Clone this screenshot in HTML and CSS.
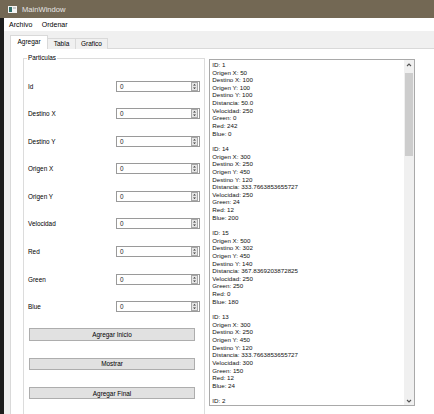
FILE: index.html
```html
<!DOCTYPE html>
<html>
<head>
<meta charset="utf-8">
<link rel="stylesheet" href="styles.css">
</head>
<body>
<div class="titlebar">
  <svg class="appicon" viewBox="0 0 9 7"><rect x="0" y="0" width="9" height="7" fill="#f4f4f4"/><rect x="1" y="1" width="3" height="5" fill="#2f6f6a"/><rect x="5" y="1" width="3" height="2" fill="#c9c9c9"/></svg>
  <span>MainWindow</span>
</div>
<div class="main">
  <div class="desk"></div>
  <div class="win">
    <div class="menubar"><span class="menu">Archivo</span><span class="menu">Ordenar</span></div>
    <div class="client">
      <div class="tabbar">
        <div class="tab active t1">Agregar</div>
        <div class="tab t2">Tabla</div>
        <div class="tab t3">Grafico</div>
      </div>
      <div class="pane">
        <div class="group">
          <span class="legend">Particulas</span>
          <div class="fields">
            <div class="field"><span class="lbl">Id</span><div class="spin"><span>0</span><svg class="spinbtn" viewBox="0 0 7 9"><rect x="0.5" y="0.5" width="6" height="8" fill="#e6e6e6" stroke="#a8a8a8"/><path d="M2 3.6 L3.5 2 L5 3.6Z M2 5.4 L3.5 7 L5 5.4Z" fill="#333"/></svg></div></div>
            <div class="field"><span class="lbl">Destino X</span><div class="spin"><span>0</span><svg class="spinbtn" viewBox="0 0 7 9"><rect x="0.5" y="0.5" width="6" height="8" fill="#e6e6e6" stroke="#a8a8a8"/><path d="M2 3.6 L3.5 2 L5 3.6Z M2 5.4 L3.5 7 L5 5.4Z" fill="#333"/></svg></div></div>
            <div class="field"><span class="lbl">Destino Y</span><div class="spin"><span>0</span><svg class="spinbtn" viewBox="0 0 7 9"><rect x="0.5" y="0.5" width="6" height="8" fill="#e6e6e6" stroke="#a8a8a8"/><path d="M2 3.6 L3.5 2 L5 3.6Z M2 5.4 L3.5 7 L5 5.4Z" fill="#333"/></svg></div></div>
            <div class="field"><span class="lbl">Origen X</span><div class="spin"><span>0</span><svg class="spinbtn" viewBox="0 0 7 9"><rect x="0.5" y="0.5" width="6" height="8" fill="#e6e6e6" stroke="#a8a8a8"/><path d="M2 3.6 L3.5 2 L5 3.6Z M2 5.4 L3.5 7 L5 5.4Z" fill="#333"/></svg></div></div>
            <div class="field"><span class="lbl">Origen Y</span><div class="spin"><span>0</span><svg class="spinbtn" viewBox="0 0 7 9"><rect x="0.5" y="0.5" width="6" height="8" fill="#e6e6e6" stroke="#a8a8a8"/><path d="M2 3.6 L3.5 2 L5 3.6Z M2 5.4 L3.5 7 L5 5.4Z" fill="#333"/></svg></div></div>
            <div class="field"><span class="lbl">Velocidad</span><div class="spin"><span>0</span><svg class="spinbtn" viewBox="0 0 7 9"><rect x="0.5" y="0.5" width="6" height="8" fill="#e6e6e6" stroke="#a8a8a8"/><path d="M2 3.6 L3.5 2 L5 3.6Z M2 5.4 L3.5 7 L5 5.4Z" fill="#333"/></svg></div></div>
            <div class="field"><span class="lbl">Red</span><div class="spin"><span>0</span><svg class="spinbtn" viewBox="0 0 7 9"><rect x="0.5" y="0.5" width="6" height="8" fill="#e6e6e6" stroke="#a8a8a8"/><path d="M2 3.6 L3.5 2 L5 3.6Z M2 5.4 L3.5 7 L5 5.4Z" fill="#333"/></svg></div></div>
            <div class="field"><span class="lbl">Green</span><div class="spin"><span>0</span><svg class="spinbtn" viewBox="0 0 7 9"><rect x="0.5" y="0.5" width="6" height="8" fill="#e6e6e6" stroke="#a8a8a8"/><path d="M2 3.6 L3.5 2 L5 3.6Z M2 5.4 L3.5 7 L5 5.4Z" fill="#333"/></svg></div></div>
            <div class="field"><span class="lbl">Blue</span><div class="spin"><span>0</span><svg class="spinbtn" viewBox="0 0 7 9"><rect x="0.5" y="0.5" width="6" height="8" fill="#e6e6e6" stroke="#a8a8a8"/><path d="M2 3.6 L3.5 2 L5 3.6Z M2 5.4 L3.5 7 L5 5.4Z" fill="#333"/></svg></div></div>
          </div>
          <div class="buttons">
            <div class="btn">Agregar Inicio</div>
            <div class="btn">Mostrar</div>
            <div class="btn">Agregar Final</div>
          </div>
        </div>
        <div class="output">
          <pre class="text">ID: 1
Origen X: 50
Destino X: 100
Origen Y: 100
Destino Y: 100
Distancia: 50.0
Velocidad: 250
Green: 0
Red: 242
Blue: 0

ID: 14
Origen X: 300
Destino X: 250
Origen Y: 450
Destino Y: 120
Distancia: 333.7663853655727
Velocidad: 250
Green: 24
Red: 12
Blue: 200

ID: 15
Origen X: 500
Destino X: 302
Origen Y: 450
Destino Y: 140
Distancia: 367.8369203872825
Velocidad: 250
Green: 250
Red: 0
Blue: 180

ID: 13
Origen X: 300
Destino X: 250
Origen Y: 450
Destino Y: 120
Distancia: 333.7663853655727
Velocidad: 300
Green: 150
Red: 12
Blue: 24

ID: 2</pre>
          <div class="vscroll">
            <svg class="arrow" viewBox="0 0 6 4"><path d="M1 3 L3 1 L5 3" fill="none" stroke="#555" stroke-width="1.1"/></svg>
            <div class="track"><div class="thumb"></div></div>
            <svg class="arrow" viewBox="0 0 6 4"><path d="M1 1 L3 3 L5 1" fill="none" stroke="#555" stroke-width="1.1"/></svg>
          </div>
        </div>
      </div>
    </div>
  </div>
</div>
</body>
</html>
```

FILE: styles.css
```css
* { box-sizing: border-box; }
body {
  margin: 0;
  width: 434px;
  height: 414px;
  overflow: hidden;
  background: #f0f0f0;
  font-family: "Liberation Sans", Arial, sans-serif;
  color: #000;
}
.titlebar {
  height: 18px;
  background: #736854;
  display: flex;
  align-items: center;
  padding-left: 8px;
  color: #e6e6e6;
  font-size: 7.6px;
}
.appicon { width: 9px; height: 7px; margin-right: 5px; }
.main { display: flex; height: 396px; overflow: hidden; }
.desk { width: 4px; background: #1d1d1d; flex: none; }
.win { flex: 1; display: flex; flex-direction: column; background: #f0f0f0; min-width: 0; }
.menubar {
  height: 13px;
  background: #fff;
  display: flex;
  align-items: center;
  font-size: 7px;
  padding-left: 5px;
}
.menu { margin-right: 9.5px; }
.client { flex: 1; display: flex; flex-direction: column; padding: 4px 0 0 6px; min-height: 0; }
.tabbar { display: flex; align-items: flex-end; height: 14px; margin-bottom: -1px; position: relative; z-index: 1; }
.tab {
  height: 11px;
  border: 1px solid #d9d9d9;
  border-bottom: none;
  background: #f0f0f0;
  font-size: 6.5px;
  display: flex;
  align-items: center;
  justify-content: center;
  margin-left: -1px;
  padding-bottom: 1px;
}
.tab.active { height: 14px; background: #fff; margin-left: 0; padding-bottom: 2px; }
.t1 { width: 38px; }
.t2 { width: 29px; }
.t3 { width: 33px; }
.pane {
  flex: 1;
  border: 1px solid #d9d9d9;
  border-bottom: none;
  background: #fff;
  display: flex;
  align-items: stretch;
  padding: 9px 0 0 12px;
  margin-right: -20px;
  min-height: 0;
  overflow: hidden;
}
.group {
  position: relative;
  width: 182px;
  border: 1px solid #dcdcdc;
  border-bottom: none;
  padding: 21.7px 4px 0 4px;
  flex: none;
}
.legend {
  position: absolute;
  left: 3px;
  top: -5px;
  background: #fff;
  padding: 0 1px;
  font-size: 6.4px;
  line-height: 8px;
}
.fields { display: flex; flex-direction: column; gap: 16.55px; }
.field { display: flex; align-items: center; height: 11px; }
.lbl { font-size: 6.4px; }
.spin {
  margin-left: auto;
  width: 84px;
  height: 11px;
  border: 1px solid #9a9a9a;
  background: #fff;
  display: flex;
  align-items: center;
  padding: 0 1px 0 3px;
  font-size: 6.4px;
  color: #222;
}
.spin span { flex: 1; }
.spinbtn { width: 7px; height: 9px; }
.buttons { display: flex; flex-direction: column; gap: 16.9px; margin-top: 16.3px; padding: 0 5px 0 1px; }
.btn {
  height: 12.4px;
  background: #e1e1e1;
  border: 1px solid #adadad;
  font-size: 6.4px;
  display: flex;
  align-items: center;
  justify-content: center;
}
.output {
  margin: 1.3px 0 0 4.3px;
  width: 206px;
  height: 346.4px;
  border: 1px solid #a9a9a9;
  background: #fff;
  display: flex;
  flex: none;
  align-self: flex-start;
}
.text {
  flex: 1;
  margin: 0;
  padding: 0.6px 0 0 2px;
  font-family: "Liberation Sans", Arial, sans-serif;
  font-size: 6.2px;
  line-height: 7.64px;
  overflow: hidden;
  white-space: pre;
  color: #111;
}
.vscroll {
  width: 10px;
  background: #f0f0f0;
  display: flex;
  flex-direction: column;
  align-items: center;
}
.arrow { width: 6px; height: 4px; margin: 3px 0 4px; }
.track { flex: 1; width: 100%; padding: 2px 1px 0; }
.thumb { height: 83px; background: #cdcdcd; }
.vscroll .arrow:last-child { margin: 4px 0 2px; }
```
